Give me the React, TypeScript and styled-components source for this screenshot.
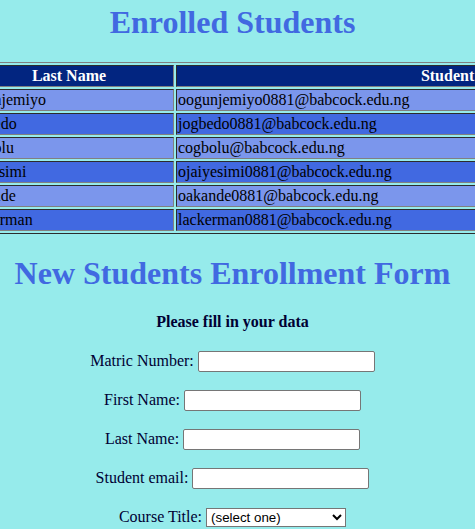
import React from "react";
import styled, { createGlobalStyle } from "styled-components";

const GlobalStyle = createGlobalStyle`
  html, body {
    margin: 0;
    padding: 0;
    background: #96ebeb;
    overflow: hidden;
  }
  body {
    font-family: "Liberation Serif", "Times New Roman", serif;
    font-size: 16px;
    color: #000;
  }
`;

const Page = styled.div`
  width: 465px;
  padding-right: 10px;
  height: 529px;
  overflow: hidden;
`;

const Heading = styled.h1<{ $top: number }>`
  margin: ${(p) => p.$top}px 0 21px;
  text-align: center;
  color: #4169e1;
  font-size: 32px;
  line-height: 37px;
  font-weight: bold;
  white-space: nowrap;
`;

const Table = styled.table`
  margin-left: -39px;
  border-collapse: separate;
  border-spacing: 2px;
  border: 1px outset grey;
  width: 806px;
  table-layout: fixed;
`;

const HeadCell = styled.th<{ $w: number }>`
  width: ${(p) => p.$w}px;
  box-sizing: border-box;
  border: 1px inset grey;
  padding: 1px;
  background: #022580;
  color: #fff;
  font-weight: bold;
  line-height: 18px;
  text-align: center;
`;

const Row = styled.tr<{ $alt: boolean }>`
  background: ${(p) => (p.$alt ? "#4169e1" : "#7b96ec")};
`;

const Cell = styled.td`
  border: 1px inset grey;
  padding: 1px;
  line-height: 18px;
  text-align: left;
  white-space: nowrap;
  overflow: hidden;
`;

const FormIntro = styled.p`
  margin: 21px 0 18px;
  text-align: center;
  font-weight: bold;
  color: #000033;
`;

const Field = styled.p`
  margin: 16px 0;
  line-height: 23px;
  text-align: center;
  color: #000033;
  white-space: nowrap;
`;

const TextInput = styled.input`
  width: 177px;
  height: 21px;
  box-sizing: border-box;
  border: 1px solid #767676;
  border-radius: 2px;
  padding: 1px 2px;
  background: #fff;
  font-family: "Liberation Sans", Arial, sans-serif;
  font-size: 13.33px;
  vertical-align: baseline;
`;

const Select = styled.select`
  width: 140px;
  height: 19px;
  box-sizing: border-box;
  font-family: "Liberation Sans", Arial, sans-serif;
  font-size: 13.33px;
  color: #000;
  background: #fff;
  border: 1px solid #767676;
  border-radius: 0;
`;

const students = [
  { last: "Ogunjemiyo", email: "oogunjemiyo0881@babcock.edu.ng" },
  { last: "Ogbedo", email: "jogbedo0881@babcock.edu.ng" },
  { last: "Ogbolu", email: "cogbolu@babcock.edu.ng" },
  { last: "Jaiyesimi", email: "ojaiyesimi0881@babcock.edu.ng" },
  { last: "Akande", email: "oakande0881@babcock.edu.ng" },
  { last: "Ackerman", email: "lackerman0881@babcock.edu.ng" },
];

const fields = ["Matric Number:", "First Name:", "Last Name:", "Student email:"];

export default function App() {
  return (
    <>
      <GlobalStyle />
      <Page>
        <Heading $top={4}>Enrolled Students</Heading>
        <Table>
          <thead>
            <tr>
              <HeadCell $w={210}>Last Name</HeadCell>
              <HeadCell $w={588}>Student Email</HeadCell>
            </tr>
          </thead>
          <tbody>
            {students.map((s, i) => (
              <Row key={s.email} $alt={i % 2 === 1}>
                <Cell>{s.last}</Cell>
                <Cell>{s.email}</Cell>
              </Row>
            ))}
          </tbody>
        </Table>
        <Heading $top={21}>New Students Enrollment Form</Heading>
        <FormIntro>Please fill in your data</FormIntro>
        {fields.map((f) => (
          <Field key={f}>
            {f} <TextInput type="text" />
          </Field>
        ))}
        <Field>
          Course Title:{" "}
          <Select defaultValue="">
            <option value="">(select one)</option>
            <option value="cosc">Computer Science</option>
            <option value="seng">Software Eng.</option>
            <option value="info">Info. Technology</option>
          </Select>
        </Field>
      </Page>
    </>
  );
}
